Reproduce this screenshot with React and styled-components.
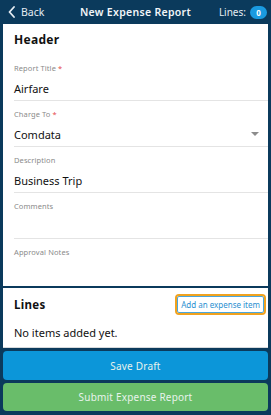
import React from "react";
import styled, { createGlobalStyle } from "styled-components";

const Global = createGlobalStyle`
  html, body { margin: 0; padding: 0; background: #0b3a5c; }
  body { font-family: "Noto Sans", "Open Sans", sans-serif; }
  * { box-sizing: border-box; }
`;

const Page = styled.div`
  width: 271px;
  height: 415px;
  background: #0b3a5c;
  display: flex;
  flex-direction: column;
  overflow: hidden;
`;

const TopBar = styled.div`
  height: 24px;
  display: flex;
  align-items: center;
  justify-content: space-between;
  padding: 0 4px 0 8px;
  color: #fff;
  position: relative;
`;

const Back = styled.div`
  display: flex;
  align-items: center;
  gap: 6px;
  font-size: 10.5px;
  color: #e6edf3;
`;

const Title = styled.div`
  position: absolute;
  left: 0;
  right: 0;
  text-align: center;
  font-size: 10.5px;
  font-weight: 600;
  letter-spacing: 0.3px;
  pointer-events: none;
  color: #f2f5f8;
`;

const LinesCount = styled.div`
  display: flex;
  align-items: center;
  gap: 4px;
  font-size: 10px;
  color: #e6edf3;
`;

const Badge = styled.span`
  display: inline-flex;
  align-items: center;
  justify-content: center;
  width: 17px;
  height: 13px;
  border-radius: 7px;
  background: #1a9ae0;
  color: #fff;
  font-size: 8px;
  font-weight: 700;
`;

const Card = styled.div`
  background: #fff;
  margin: 0 3px;
  display: flex;
  flex-direction: column;
`;

const HeaderCard = styled(Card)`
  height: 262px;
`;

const LinesCard = styled(Card)`
  margin-top: 2px;
  height: 60px;
  padding: 8px 3px 0 11px;
  border-bottom: 1px solid #d6d9dc;
`;

const SectionTitle = styled.div`
  font-size: 12px;
  font-weight: 700;
  letter-spacing: 0.3px;
  color: #111;
  padding: 9px 0 0 11px;
  height: 31px;
  line-height: 14px;
`;

const Field = styled.div`
  margin-left: 11px;
  height: 46px;
  padding-top: 8px;
  border-bottom: ${(p) => (p.$last ? "none" : "1px solid #e4e4e4")};
  display: flex;
  flex-direction: column;
  position: relative;
`;

const Label = styled.div`
  font-size: 7.5px;
  color: #8a8a8a;
  line-height: 10px;
  letter-spacing: 0.1px;
`;

const Req = styled.span`
  color: #e5484d;
`;

const Value = styled.div`
  font-size: 11px;
  color: #111;
  line-height: 16px;
  margin-top: 8px;
`;

const Caret = styled.span`
  position: absolute;
  right: 9px;
  top: 31px;
  width: 0;
  height: 0;
  border-left: 4px solid transparent;
  border-right: 4px solid transparent;
  border-top: 4px solid #8c8c8c;
`;

const LinesHead = styled.div`
  display: flex;
  align-items: center;
  justify-content: space-between;
`;

const LinesTitle = styled.div`
  font-size: 11.5px;
  font-weight: 700;
  letter-spacing: 0.3px;
  color: #111;
`;

const AddButton = styled.button`
  font-family: inherit;
  font-size: 8px;
  color: #2a8fd0;
  background: #fff;
  border: 1px solid #4aa6dc;
  border-radius: 2px;
  outline: 2px solid #f0a21f;
  outline-offset: 0;
  height: 17px;
  padding: 0 3px;
  margin-right: 1px;
  cursor: pointer;
`;

const Empty = styled.div`
  font-size: 11px;
  color: #111;
  margin-top: 12px;
`;

const Actions = styled.div`
  display: flex;
  flex-direction: column;
  gap: 3px;
  padding: 3px 3px 4px 3px;
`;

const ActionButton = styled.button`
  font-family: inherit;
  height: ${(p) => p.$h}px;
  border: none;
  border-radius: 4px;
  background: ${(p) => p.$bg};
  color: #e8f3ec;
  font-size: 10px;
  letter-spacing: 0.2px;
  cursor: pointer;
`;

export default function App() {
  return (
    <Page>
      <Global />
      <TopBar>
        <Back>
          <svg width="7" height="12" viewBox="0 0 7 12">
            <path d="M6 1 L1.5 6 L6 11" stroke="#e6edf3" strokeWidth="1.8" fill="none" strokeLinecap="round" strokeLinejoin="round" />
          </svg>
          Back
        </Back>
        <Title>New Expense Report</Title>
        <LinesCount>
          Lines: <Badge>0</Badge>
        </LinesCount>
      </TopBar>
      <HeaderCard>
        <SectionTitle>Header</SectionTitle>
        <Field>
          <Label>
            Report Title <Req>*</Req>
          </Label>
          <Value>Airfare</Value>
        </Field>
        <Field>
          <Label>
            Charge To <Req>*</Req>
          </Label>
          <Value>Comdata</Value>
          <Caret />
        </Field>
        <Field>
          <Label>Description</Label>
          <Value>Business Trip</Value>
        </Field>
        <Field>
          <Label>Comments</Label>
        </Field>
        <Field $last>
          <Label>Approval Notes</Label>
        </Field>
      </HeaderCard>
      <LinesCard>
        <LinesHead>
          <LinesTitle>Lines</LinesTitle>
          <AddButton>Add an expense item</AddButton>
        </LinesHead>
        <Empty>No items added yet.</Empty>
      </LinesCard>
      <Actions>
        <ActionButton $h={29} $bg="#0c96d9">Save Draft</ActionButton>
        <ActionButton $h={28} $bg="#69bd6a">Submit Expense Report</ActionButton>
      </Actions>
    </Page>
  );
}
